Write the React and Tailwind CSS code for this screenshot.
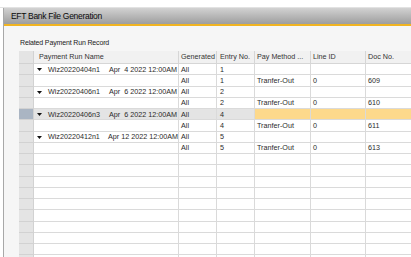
import React from "react";

const rows = [
  { parent: true, name: "Wiz20220404n1", date: "Apr  4 2022 12:00AM", gen: "All", entry: "1" },
  { gen: "All", entry: "1", pay: "Tranfer-Out", line: "0", doc: "609" },
  { parent: true, name: "Wiz20220406n1", date: "Apr  6 2022 12:00AM", gen: "All", entry: "2" },
  { gen: "All", entry: "2", pay: "Tranfer-Out", line: "0", doc: "610" },
  { parent: true, sel: true, name: "Wiz20220406n3", date: "Apr  6 2022 12:00AM", gen: "All", entry: "4" },
  { gen: "All", entry: "4", pay: "Tranfer-Out", line: "0", doc: "611" },
  { parent: true, name: "Wiz20220412n1", date: "Apr 12 2022 12:00AM", gen: "All", entry: "5" },
  { gen: "All", entry: "5", pay: "Tranfer-Out", line: "0", doc: "613" },
];

const empty = Array.from({ length: 10 }, () => ({}));

function Row({ r }) {
  const grey = r.sel ? "bg-[#e4e4e4]" : "bg-white";
  const yellow = r.sel ? "bg-[#fdd98b]" : "bg-white";
  return (
    <div className="flex h-[11.25px] leading-[10px]">
      <div className={`w-[15px] shrink-0 border-r border-b border-[#d2d2d2] ${r.sel ? "bg-[#aab5c3]" : "bg-[#e4e4e4]"}`} />
      <div className={`w-[145px] shrink-0 border-r border-b border-[#dadada] ${grey} flex items-center pt-[1px]`}>
        {r.parent && (
          <>
            <svg width="5" height="3" viewBox="0 0 5 3" className="ml-[3px] mr-[6px]">
              <polygon points="0,0 5,0 2.5,3" fill="#111" />
            </svg>
            <span className="w-[61px]">{r.name}</span>
            <span className="whitespace-pre">{r.date}</span>
          </>
        )}
      </div>
      <div className={`w-[38px] shrink-0 border-r border-b border-[#dadada] ${grey} pl-[2px] pt-[1px] flex items-center`}>{r.gen}</div>
      <div className={`w-[38px] shrink-0 border-r border-b border-[#dadada] ${grey} pl-[3px] pt-[1px] flex items-center`}>{r.entry}</div>
      <div className={`w-[56px] shrink-0 border-r border-b border-[#dadada] ${yellow} pl-[2px] pt-[1px] flex items-center`}>{r.pay}</div>
      <div className={`w-[55px] shrink-0 border-r border-b border-[#dadada] ${yellow} pl-[2px] pt-[1px] flex items-center`}>{r.line}</div>
      <div className={`w-[60px] shrink-0 border-b border-[#dadada] ${yellow} pl-[2px] pt-[1px] flex items-center`}>{r.doc}</div>
    </div>
  );
}

export default function App() {
  return (
    <div
      className="w-[411px] h-[257px] bg-white overflow-hidden text-[#2a2a2a]"
      style={{ fontFamily: '"Liberation Sans", Arial, sans-serif' }}
    >
      <div className="h-[8px] border-b border-[#e2e2e2]" />
      <div className="ml-[3px] h-[249px] border-l border-[#a8a8a8] flex flex-col">
        <div className="h-[16px] shrink-0 bg-gradient-to-b from-[#d2d2d2] to-[#9e9e9e] flex items-center pl-[7px] text-[8.5px] tracking-[-0.3px] text-[#0a0a0a]">
          EFT Bank File Generation
        </div>
        <div className="h-[2px] shrink-0 bg-[#f1b421]" />
        <div className="flex-1 bg-[#f6f6f6] flex flex-col">
          <div className="h-[25px] shrink-0 flex items-end pl-[16px] pb-[4px] text-[7px] tracking-[-0.15px] leading-[8px] text-[#222]">
            Related Payment Run Record
          </div>
          <div className="ml-[15px] flex-1 bg-white text-[7.2px] overflow-hidden">
            <div className="flex h-[13px] bg-[#f1f1f1] leading-[10px] text-[#333]">
              <div className="w-[15px] shrink-0 border-r border-b border-[#d2d2d2] bg-[#e4e4e4]" />
              <div className="w-[145px] shrink-0 border-r border-b border-[#d6d6d6] pl-[5px] flex items-center">Payment Run Name</div>
              <div className="w-[38px] shrink-0 border-r border-b border-[#d6d6d6] pl-[2px] flex items-center">Generated</div>
              <div className="w-[38px] shrink-0 border-r border-b border-[#d6d6d6] pl-[3px] flex items-center">Entry No.</div>
              <div className="w-[56px] shrink-0 border-r border-b border-[#d6d6d6] pl-[2px] flex items-center">Pay Method ...</div>
              <div className="w-[55px] shrink-0 border-r border-b border-[#d6d6d6] pl-[2px] flex items-center">Line ID</div>
              <div className="w-[60px] shrink-0 border-b border-[#d6d6d6] pl-[2px] flex items-center">Doc No.</div>
            </div>
            {rows.map((r, i) => (
              <Row key={i} r={r} />
            ))}
            {empty.map((r, i) => (
              <Row key={"e" + i} r={r} />
            ))}
          </div>
        </div>
      </div>
    </div>
  );
}
